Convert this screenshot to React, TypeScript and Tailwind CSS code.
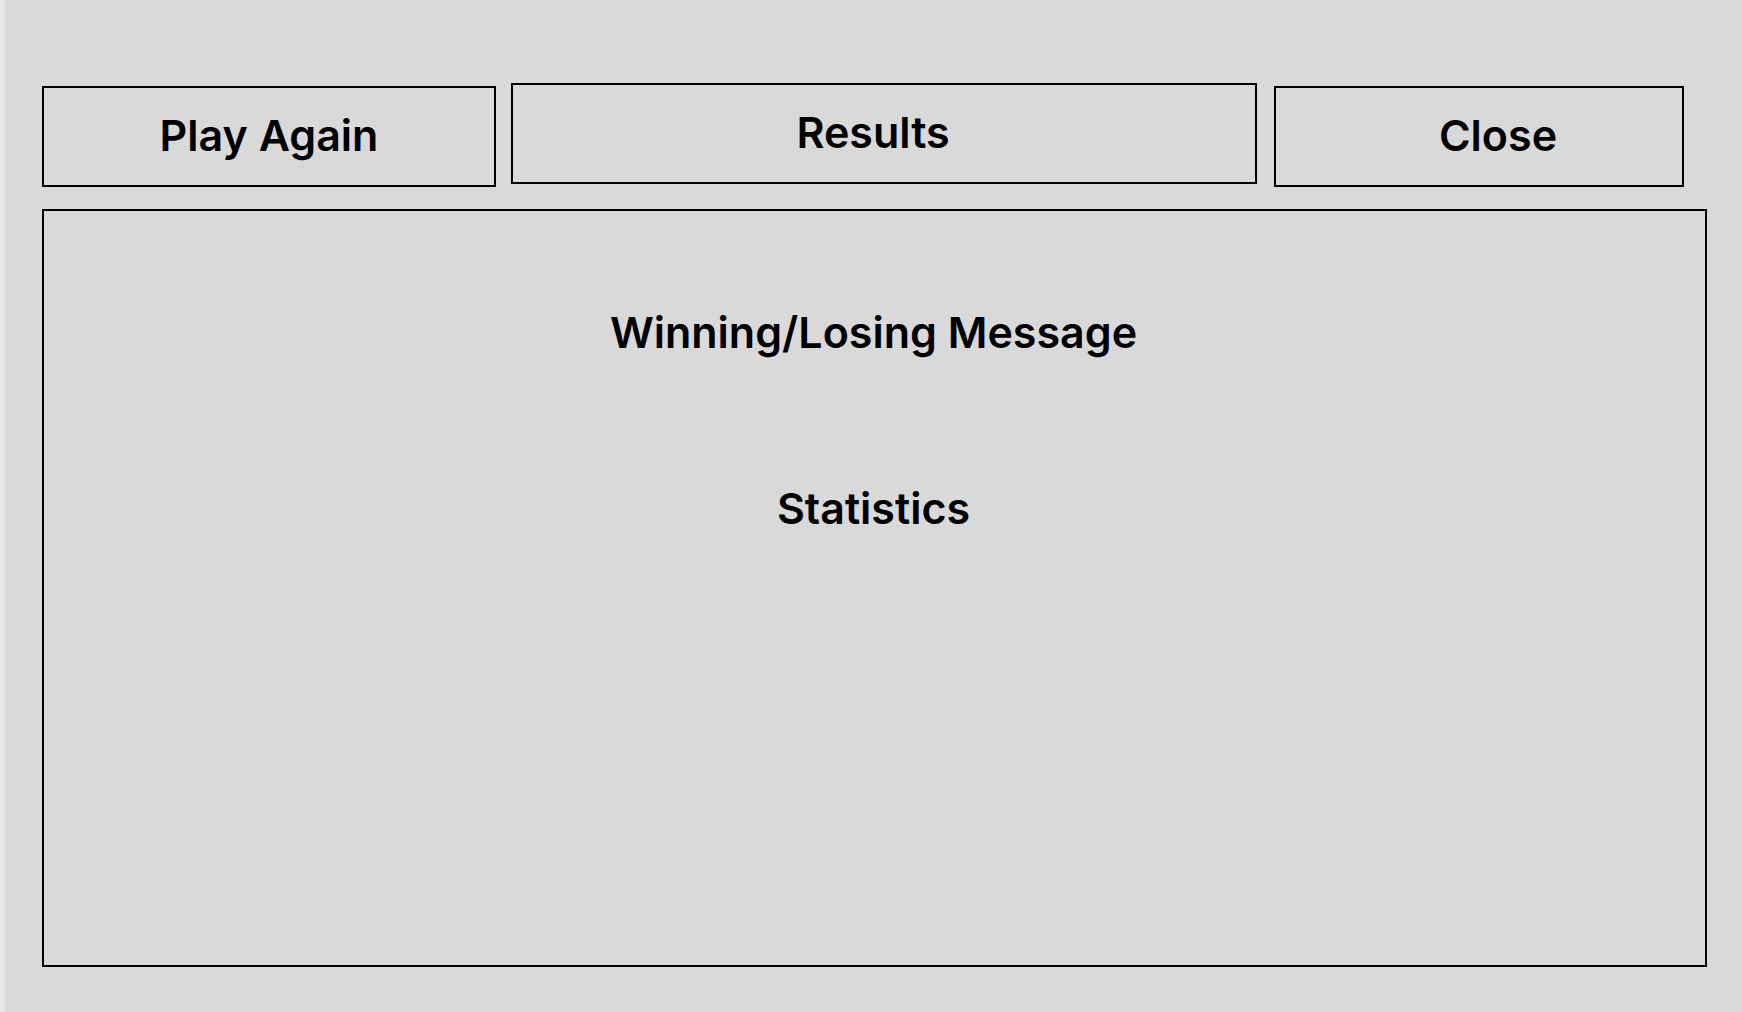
import React from "react";

const font = { fontFamily: "Inter, 'Noto Sans', sans-serif" };

function ActionBox({ label, className }: { label: string; className: string }) {
  return (
    <button
      className={`flex h-[101px] items-center justify-center border-2 border-black bg-[#d9d9d9] pb-[2px] text-[43px] font-semibold leading-none text-black ${className}`}
    >
      {label}
    </button>
  );
}

export default function App() {
  return (
    <div className="flex h-[1012px] w-full bg-[#d9d9d9]" style={font}>
      <div className="w-[5px] shrink-0 bg-[#e6e6e6]" />
      <main className="flex flex-1 flex-col pl-[37px] pt-[83px]">
        <div className="flex items-start">
          <ActionBox label="Play Again" className="mt-[3px] w-[454px]" />
          <ActionBox label="Results" className="ml-[15px] w-[746px] pr-[22px]" />
          <ActionBox label="Close" className="ml-[17px] mt-[3px] w-[410px] pl-[38px]" />
        </div>
        <section className="mt-[22px] flex h-[758px] w-[1665px] flex-col items-center border-2 border-black pt-[100px] text-[43px] font-semibold leading-none text-black">
          <h2 className="pr-[2px]">Winning/Losing Message</h2>
          <h2 className="mt-[133px] pr-[2px]">Statistics</h2>
        </section>
      </main>
    </div>
  );
}
